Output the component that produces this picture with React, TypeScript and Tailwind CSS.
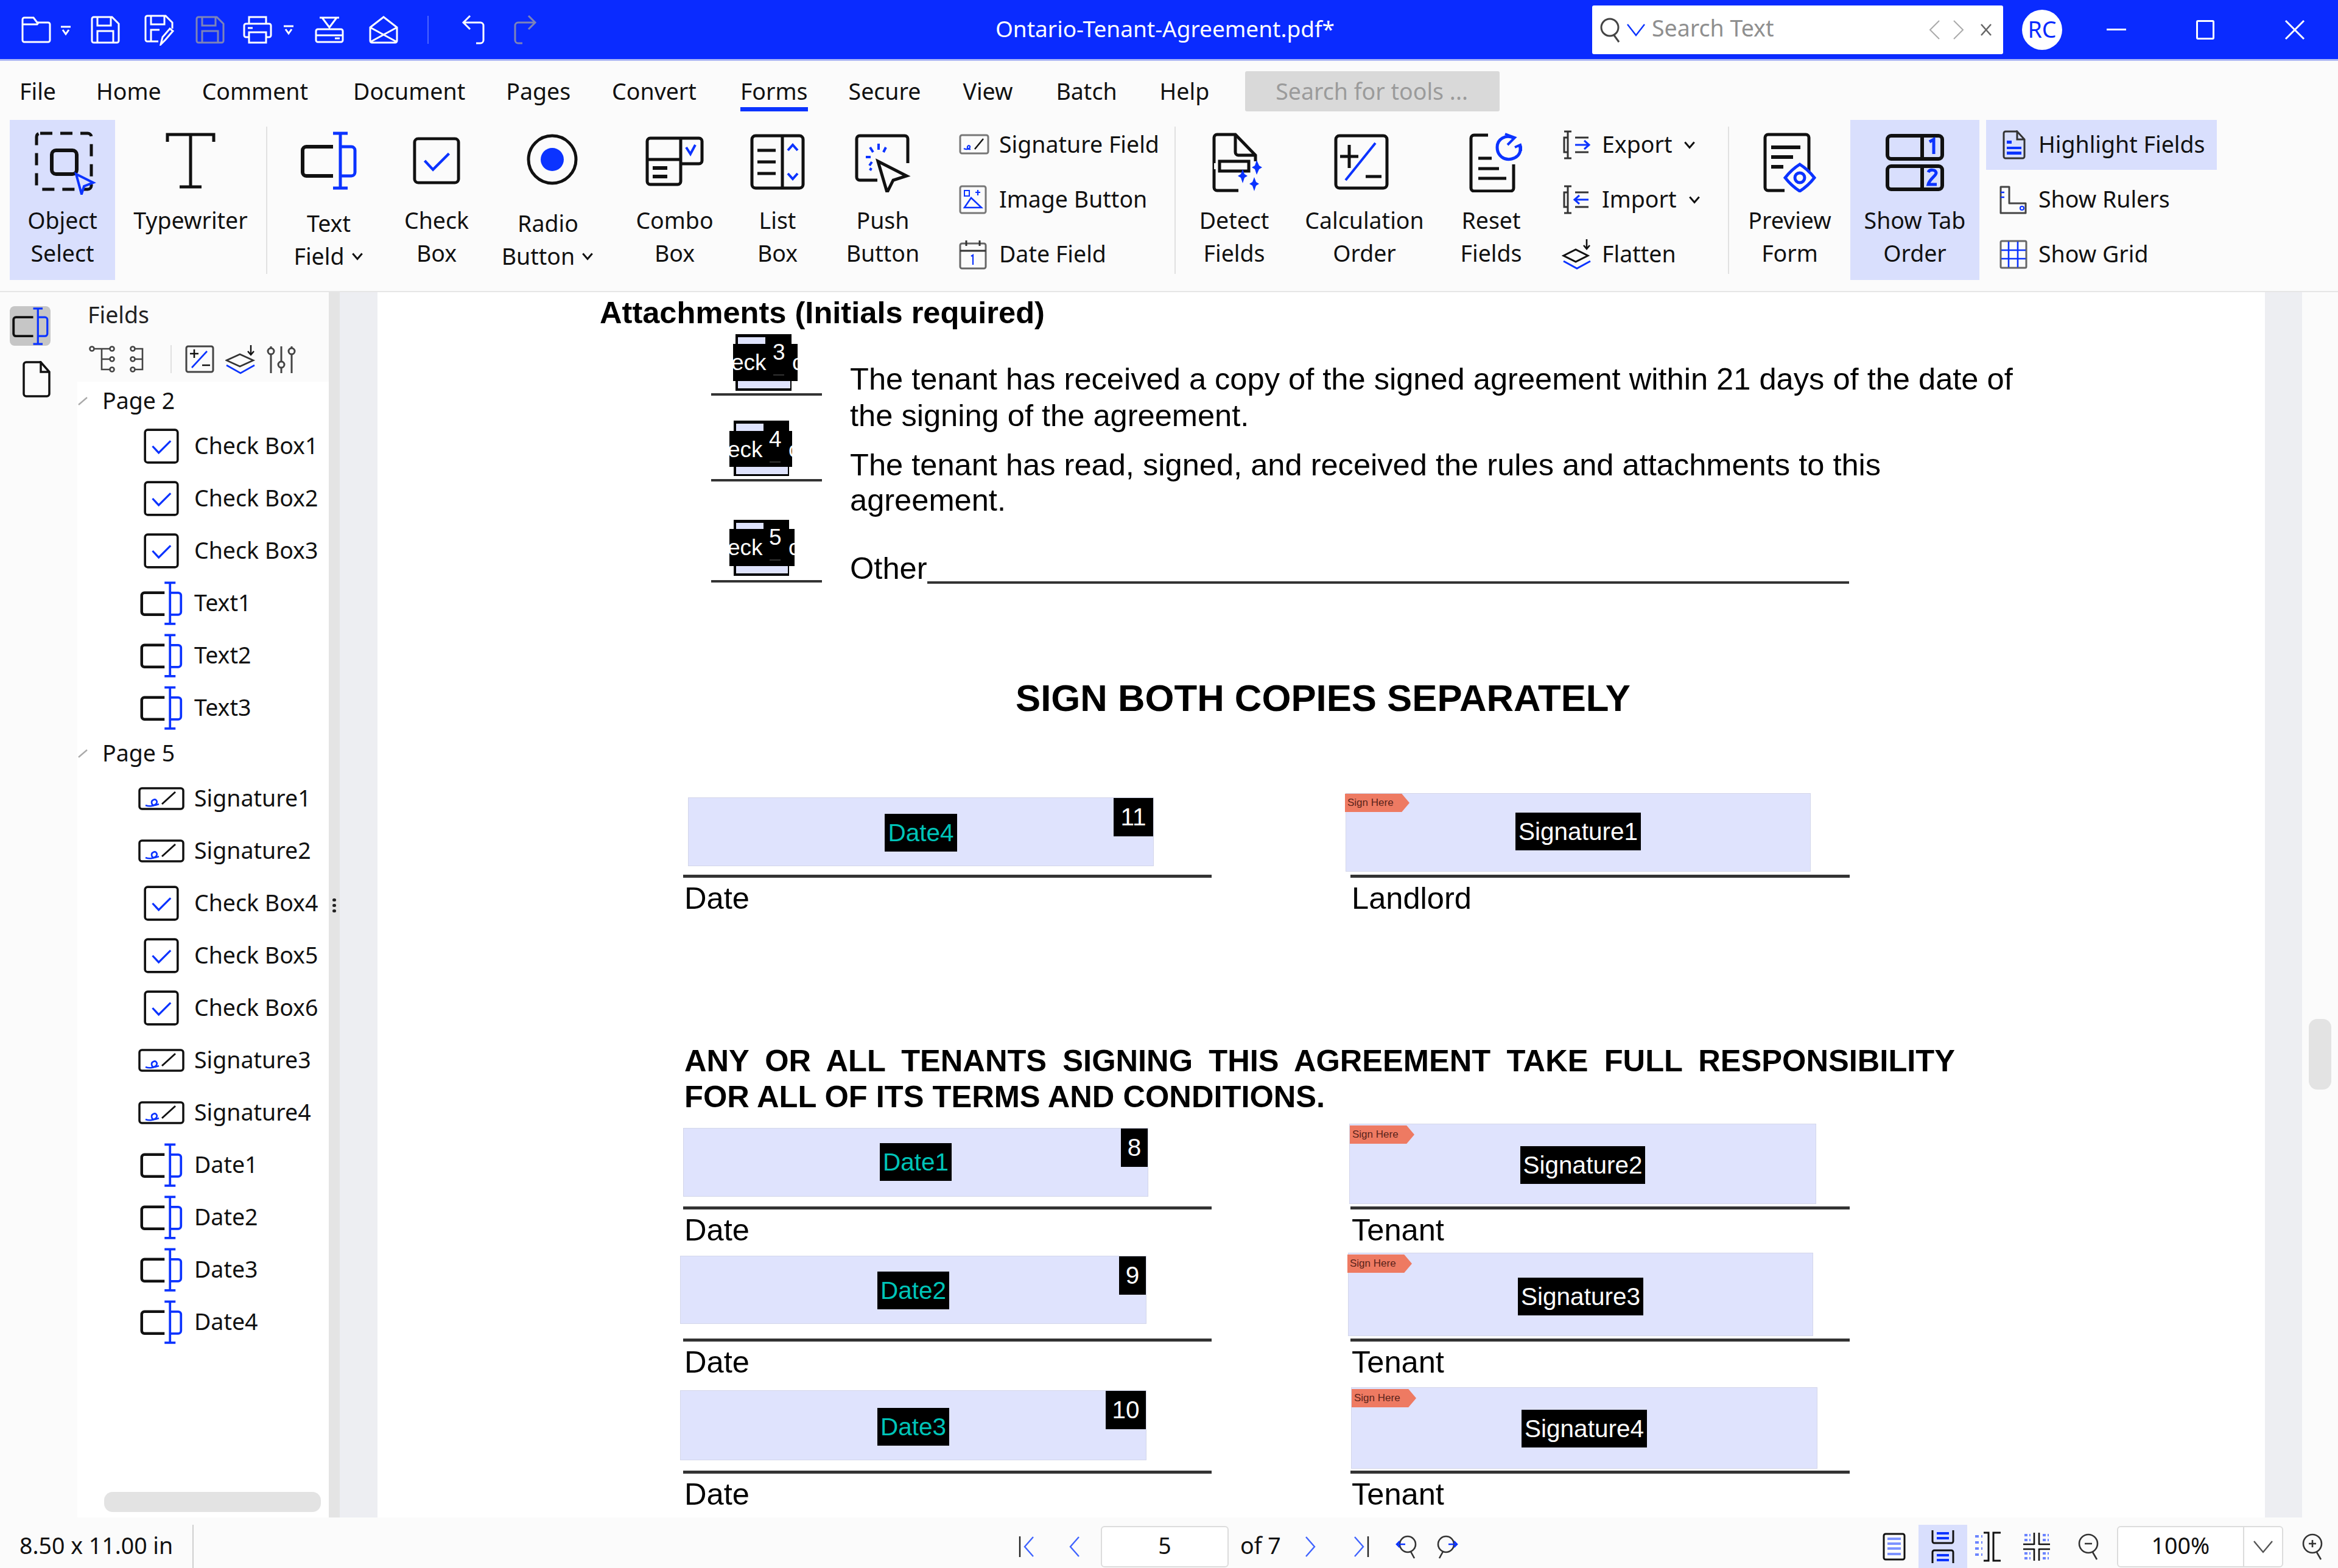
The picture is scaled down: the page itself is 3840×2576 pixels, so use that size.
import type { ReactNode } from "react";

const BLUE = "#0b33ff";

type IconProps = { className?: string };

const Chev = ({ className = "" }: IconProps) => (
  <svg className={className} viewBox="0 0 20 12" fill="none" stroke="#111" strokeWidth="2.8">
    <path d="M3 2l7 8 7-8" />
  </svg>
);

const TextFieldIcon = ({ className = "" }: IconProps) => (
  <svg className={className} viewBox="0 0 96 96" fill="none" strokeWidth="5">
    <path d="M55 25H11a6 6 0 0 0-6 6v36a6 6 0 0 0 6 6h44" stroke="#111" strokeWidth="6" />
    <path d="M55 3h24M67 3v90M55 93h24M67 25h18a6 6 0 0 1 6 6v36a6 6 0 0 1-6 6H67" stroke={BLUE} />
  </svg>
);

const CheckIcon = ({ className = "" }: IconProps) => (
  <svg className={className} viewBox="0 0 80 80" fill="none">
    <rect x="3" y="3" width="74" height="74" rx="6" stroke="#111" strokeWidth="5" />
    <path d="M20 40l14 15 27-27" stroke={BLUE} strokeWidth="4.5" />
  </svg>
);

const SigIcon = ({ className = "" }: IconProps) => (
  <svg className={className} viewBox="0 0 76 38" fill="none">
    <rect x="2" y="2" width="72" height="34" rx="4" stroke="#111" strokeWidth="3.5" />
    <path d="M12 30c5 2 13 2 17-2 4-4 0-9-4-7-5 2-3 9 1 9 3 0 5-1 8-2" stroke={BLUE} strokeWidth="2.6" />
    <path d="M39 28L61 8" stroke="#111" strokeWidth="3" />
  </svg>
);

const BigIcon = {
  Object: () => (
    <svg className="ml-[10px] h-[104px] w-[102px]" viewBox="0 0 102 104" fill="none">
      <rect x="3" y="3" width="90" height="92" rx="6" stroke="#111" strokeWidth="5" strokeDasharray="20 13" />
      <rect x="28" y="31" width="41" height="39" rx="7" stroke="#111" strokeWidth="6" />
      <path d="M68 70l28 14-15 6-4 13z" stroke={BLUE} strokeWidth="4" fill="#dbe0fd" />
    </svg>
  ),
  Typewriter: () => (
    <svg className="h-[96px] w-[82px]" viewBox="0 0 82 96" fill="none" stroke="#111" strokeWidth="5">
      <path d="M3 17V5h76v12M41 5v84M23 91h36" />
    </svg>
  ),
  Radio: () => (
    <svg className="ml-[14px] mt-[2px] h-[88px] w-[86px]" viewBox="0 0 86 88" fill="none">
      <circle cx="43" cy="44" r="39" stroke="#111" strokeWidth="5" />
      <circle cx="43" cy="44" r="19" fill={BLUE} />
    </svg>
  ),
  Combo: () => (
    <svg className="mt-[8px] h-[82px] w-[96px]" viewBox="0 0 96 82" fill="none" stroke="#111" strokeWidth="5">
      <path d="M3 8a5 5 0 0 1 5-5h80a5 5 0 0 1 5 5v32a5 5 0 0 1-5 5H58M58 3v42M3 8v66a5 5 0 0 0 5 5h45a5 5 0 0 0 5-5V38M3 38h55" />
      <path d="M12 52h24M12 66h24" strokeWidth="6" />
      <path d="M67 18l7 11 8-15" stroke={BLUE} strokeWidth="4" />
    </svg>
  ),
  List: () => (
    <svg className="mt-[4px] h-[92px] w-[90px]" viewBox="0 0 90 92" fill="none" stroke="#111" strokeWidth="5">
      <rect x="3" y="3" width="84" height="86" rx="6" />
      <path d="M53 3v86M12 27h30M12 46h30M12 65h30" />
      <path d="M62 27l8-9 8 9M62 65l8 9 8-9" stroke={BLUE} strokeWidth="4" />
    </svg>
  ),
  Push: () => (
    <svg className="mt-[4px] h-[96px] w-[94px]" viewBox="0 0 94 96" fill="none">
      <path d="M38 76H9a5 5 0 0 1-5-5V8a5 5 0 0 1 5-5h74a5 5 0 0 1 5 5v40" stroke="#111" strokeWidth="5" />
      <path d="M39 45l47 24-22 7-10 20z" stroke="#111" strokeWidth="5" fill="#fbfbfb" />
      <path d="M40 16v10M26 22l5 8M52 22l-4 8M19 38h8M25 52l4-6M26 60l2-4" stroke={BLUE} strokeWidth="4" />
    </svg>
  ),
  Detect: () => (
    <svg className="ml-[10px] mt-[2px] h-[98px] w-[84px]" viewBox="0 0 84 98" fill="none">
      <path d="M44 95H9a5 5 0 0 1-5-5V8a5 5 0 0 1 5-5h30l33 34v10" stroke="#111" strokeWidth="5" />
      <path d="M39 3v29a5 5 0 0 0 5 5h28M13 63h48V47H13v16z" stroke="#111" strokeWidth="5" />
      <rect x="4" y="50" width="6" height="10" fill="#fbfbfb" />
      <path d="M74 45l4 9 5 3-5 3-4 9-3-9-5-3 5-3zM51 60l3 8 5 3-5 3-3 9-3-9-5-3 5-3zM70 73l3 8 5 3-5 3-3 9-3-9-5-3 5-3z" fill={BLUE} />
    </svg>
  ),
  Calc: () => (
    <svg className="mr-[10px] mt-[4px] h-[92px] w-[90px]" viewBox="0 0 90 92" fill="none">
      <rect x="3" y="3" width="84" height="86" rx="6" stroke="#111" strokeWidth="5" />
      <path d="M25 18v38M10 37h30M52 70h26" stroke="#111" strokeWidth="5" />
      <path d="M68 15L19 76" stroke={BLUE} strokeWidth="4" />
    </svg>
  ),
  Reset: () => (
    <svg className="ml-[14px] mt-[2px] h-[98px] w-[88px]" viewBox="0 0 88 98" fill="none">
      <path d="M32 4H9a5 5 0 0 0-5 5v82a5 5 0 0 0 5 5h60a5 5 0 0 0 5-5V52" stroke="#111" strokeWidth="5" />
      <path d="M16 42h22M16 59h34M16 75h46" stroke="#111" strokeWidth="5" />
      <path d="M73 8c-12-5-26 2-26 16s12 22 24 19 16-12 13-22" stroke={BLUE} strokeWidth="5" />
      <path d="M60 2l16 6-12 12M76 24l9-4 3 10" stroke={BLUE} strokeWidth="4" />
    </svg>
  ),
  Preview: () => (
    <svg className="mt-[2px] h-[98px] w-[90px]" viewBox="0 0 90 98" fill="none">
      <path d="M36 95H9a5 5 0 0 1-5-5V8a5 5 0 0 1 5-5h62a5 5 0 0 1 5 5v57" stroke="#111" strokeWidth="5" />
      <path d="M14 24h48M14 40h36M14 56h20" stroke="#111" strokeWidth="6" />
      <path d="M61 52c8 5 17 13 24 22-7 9-16 17-24 22-8-5-17-13-24-22 7-9 16-17 24-22z" stroke={BLUE} strokeWidth="5" />
      <circle cx="61" cy="74" r="8" stroke={BLUE} strokeWidth="5" />
    </svg>
  ),
  TabOrder: () => (
    <svg className="mt-[4px] h-[94px] w-[96px]" viewBox="0 0 96 94" fill="none" stroke="#111" strokeWidth="6">
      <rect x="3" y="3" width="90" height="38" rx="6" />
      <rect x="3" y="53" width="90" height="38" rx="6" />
      <path d="M60 3v38M60 53v38" />
      <path d="M72 13l7-4v24" stroke={BLUE} strokeWidth="5" />
      <path d="M70 63c2-5 12-5 13 1 0 5-11 10-13 19h14" stroke={BLUE} strokeWidth="5" />
    </svg>
  ),
};

const SmallIcon = {
  Signature: () => (
    <svg className="h-[36px] w-[50px]" viewBox="0 0 50 36" fill="none">
      <rect x="2" y="2" width="46" height="30" rx="3" stroke="#777" strokeWidth="3" />
      <path d="M8 24c4 2 9 1 10-2 1-3-3-4-4-1s1 5 5 4" stroke={BLUE} strokeWidth="2.2" />
      <path d="M26 25l14-17" stroke="#111" strokeWidth="2.5" />
    </svg>
  ),
  Image: () => (
    <svg className="h-[48px] w-[46px]" viewBox="0 0 46 48" fill="none">
      <rect x="2" y="2" width="42" height="44" rx="3" stroke="#777" strokeWidth="3" />
      <path d="M9 37l11-16 17 16z" stroke={BLUE} strokeWidth="2.5" />
      <rect x="9" y="9" width="8" height="9" stroke={BLUE} strokeWidth="2" />
      <path d="M31 8v9M27 12h8" stroke={BLUE} strokeWidth="2.2" />
    </svg>
  ),
  Date: () => (
    <svg className="h-[50px] w-[46px]" viewBox="0 0 46 50" fill="none">
      <rect x="2" y="7" width="42" height="41" rx="3" stroke="#666" strokeWidth="3" />
      <path d="M2 19h42M12 2v9M34 2v9" stroke="#333" strokeWidth="3" />
      <path d="M20 28l3-2v16" stroke={BLUE} strokeWidth="2.2" />
    </svg>
  ),
  Export: () => (
    <svg className="h-[48px] w-[50px]" viewBox="0 0 50 48" fill="none">
      <path d="M4 2h12M10 2v44M4 46h12" stroke="#333" strokeWidth="3" />
      <path d="M10 12H4v24h6M22 12h22M22 36h22" stroke="#333" strokeWidth="3" />
      <path d="M22 24h22M37 17l8 7-8 7" stroke={BLUE} strokeWidth="3" />
    </svg>
  ),
  Import: () => (
    <svg className="h-[48px] w-[50px]" viewBox="0 0 50 48" fill="none">
      <path d="M4 2h12M10 2v44M4 46h12" stroke="#333" strokeWidth="3" />
      <path d="M10 12H4v24h6M22 12h22M22 36h22" stroke="#333" strokeWidth="3" />
      <path d="M22 24h22M29 17l-8 7 8 7" stroke={BLUE} strokeWidth="3" />
    </svg>
  ),
  Flatten: () => (
    <svg className="h-[50px] w-[50px]" viewBox="0 0 50 50" fill="none">
      <path d="M41 0v14M36 10l5 6 5-6" stroke="#111" strokeWidth="2.6" />
      <path d="M3 27l20-10 20 10-20 10z" stroke="#111" strokeWidth="3" />
      <path d="M3 36l22 12 22-12" stroke={BLUE} strokeWidth="3" />
    </svg>
  ),
  Highlight: () => (
    <svg className="h-[48px] w-[38px]" viewBox="0 0 38 48" fill="none">
      <path d="M24 2H5a3 3 0 0 0-3 3v38a3 3 0 0 0 3 3h28a3 3 0 0 0 3-3V15L24 2v13h12" stroke="#333" strokeWidth="3" />
      <path d="M7 17h8v5H7zM7 27h24v4H7zM7 35h24v5H7z" fill={BLUE} />
    </svg>
  ),
  Rulers: () => (
    <svg className="h-[48px] w-[46px]" viewBox="0 0 46 48" fill="none">
      <path d="M2 46V3h14v27h27v16z" stroke="#444" strokeWidth="3" strokeLinejoin="round" />
      <path d="M2 12h6M2 20h6" stroke={BLUE} strokeWidth="2.6" />
      <circle cx="37" cy="38" r="3" stroke={BLUE} strokeWidth="2.2" />
    </svg>
  ),
  Grid: () => (
    <svg className="h-[48px] w-[46px]" viewBox="0 0 46 48" fill="none">
      <rect x="2" y="2" width="42" height="44" rx="2" stroke="#666" strokeWidth="3" />
      <path d="M15 3v42M30 3v42M3 17h40M3 31h40" stroke={BLUE} strokeWidth="2.6" />
    </svg>
  ),
};

const LargeTool = ({ icon, lines, width, active, low }: { icon: ReactNode; lines: ReactNode[]; width: string; active?: boolean; low?: boolean }) => (
  <div className={`flex h-[263px] shrink-0 flex-col items-center ${width} ${active ? "bg-[#d9dffd]" : ""}`}>
    <div className="flex h-[126px] w-full items-start justify-center pt-[19px]">{icon}</div>
    <div className={`text-center leading-[54px] ${low ? "mt-[17px]" : "mt-[12px]"}`}>
      {lines.map((l, i) => (
        <div key={i} className="flex items-center justify-center gap-[10px] whitespace-nowrap">{l}</div>
      ))}
    </div>
  </div>
);

const SmallTool = ({ icon, label, chev, active, iconBox = "w-[66px]" }: { icon: ReactNode; label: string; chev?: boolean; active?: boolean; iconBox?: string }) => (
  <div className={`flex h-[82px] items-center whitespace-nowrap ${active ? "bg-[#d9dffd]" : ""}`}>
    <div className={`flex shrink-0 items-center justify-start ${iconBox}`}>{icon}</div>
    <span className="pb-[2px]">{label}</span>
    {chev && <Chev className="ml-[18px] h-[14px] w-[22px]" />}
  </div>
);

const Sep = () => <div className="mt-[11px] h-[242px] w-[2px] shrink-0 bg-[#e1e1e1]" />;

const TitleBar = () => (
  <div className="flex h-[97px] shrink-0 items-center bg-[#0a2bff] text-white">
    <svg className="ml-[34px] h-[46px] w-[88px]" viewBox="0 0 88 46" fill="none" stroke="#fff" strokeWidth="3">
      <path d="M3 40V6a3 3 0 0 1 3-3h15l6 8h18a3 3 0 0 1 3 3v26a3 3 0 0 1-3 3H6a3 3 0 0 1-3-3zM3 14h24l3-4" />
      <path d="M66 18h16M69 23l5 7 5-7" />
    </svg>
    <svg className="ml-[26px] h-[48px] w-[50px]" viewBox="0 0 50 48" fill="none" stroke="#fff" strokeWidth="3">
      <path d="M3 6a3 3 0 0 1 3-3h30l11 11v28a3 3 0 0 1-3 3H6a3 3 0 0 1-3-3zM12 3v14h22V3M12 45V26h26v19" />
    </svg>
    <svg className="ml-[38px] h-[52px] w-[50px]" viewBox="0 0 50 52" fill="none" stroke="#fff" strokeWidth="3">
      <path d="M24 45H6a3 3 0 0 1-3-3V6a3 3 0 0 1 3-3h30l11 11v10M12 3v14h22V3M12 45V26h14" />
      <path d="M28 50l3-12 12-14 5 4-12 14z" fill="#0a2bff" />
    </svg>
    <svg className="ml-[34px] h-[48px] w-[50px]" viewBox="0 0 50 48" fill="none" stroke="#7d84b8" strokeWidth="3">
      <path d="M3 6a3 3 0 0 1 3-3h30l11 11v28a3 3 0 0 1-3 3H6a3 3 0 0 1-3-3zM12 3v14h22V3M12 45V26h26v19" />
    </svg>
    <svg className="ml-[28px] h-[48px] w-[88px]" viewBox="0 0 88 48" fill="none" stroke="#fff" strokeWidth="3">
      <path d="M11 14V3h28v11M11 36H6a3 3 0 0 1-3-3V17a3 3 0 0 1 3-3h38a3 3 0 0 1 3 3v16a3 3 0 0 1-3 3h-5M11 28h28v17H11zM9 21h8" />
      <path d="M68 18h16M71 23l5 7 5-7" />
    </svg>
    <svg className="ml-[30px] h-[46px] w-[50px]" viewBox="0 0 50 46" fill="none" stroke="#fff" strokeWidth="3">
      <path d="M9 3h32M13 3l12 16 12-16M3 25a3 3 0 0 1 3-3h38a3 3 0 0 1 3 3v15a3 3 0 0 1-3 3H6a3 3 0 0 1-3-3zM3 32h44M34 37h8" />
    </svg>
    <svg className="ml-[39px] h-[48px] w-[50px]" viewBox="0 0 50 48" fill="none" stroke="#fff" strokeWidth="3">
      <path d="M3 20L25 3l22 17v22a3 3 0 0 1-3 3H6a3 3 0 0 1-3-3zM3 20l44 24M47 20L3 44" />
    </svg>
    <div className="ml-[47px] h-[46px] w-[2px] bg-[#4d66ff]" />
    <svg className="ml-[54px] h-[50px] w-[40px]" viewBox="0 0 40 50" fill="none" stroke="#fff" strokeWidth="3">
      <path d="M14 2L3 13l11 11M3 13h28a5 5 0 0 1 5 5v24a5 5 0 0 1-5 5h-7" />
    </svg>
    <svg className="ml-[44px] h-[50px] w-[40px]" viewBox="0 0 40 50" fill="none" stroke="#7d84b8" strokeWidth="3">
      <path d="M26 2l11 11-11 11M37 13H9a5 5 0 0 0-5 5v24a5 5 0 0 0 5 5h7" />
    </svg>
    <div className="ml-[750px] w-[563px] whitespace-nowrap pb-[4px] text-center text-[37px]">Ontario-Tenant-Agreement.pdf*</div>
    <div className="ml-[420px] flex h-[80px] w-[675px] shrink-0 items-center rounded-[3px] bg-white">
      <svg className="ml-[12px] h-[44px] w-[38px]" viewBox="0 0 38 44" fill="none" stroke="#444" strokeWidth="3">
        <circle cx="17" cy="18" r="14" />
        <path d="M24 31l8 11" />
      </svg>
      <svg className="ml-[6px] h-[22px] w-[32px]" viewBox="0 0 32 22" fill="none" stroke={BLUE} strokeWidth="2.4">
        <path d="M2 2l14 18L30 2" />
      </svg>
      <span className="ml-[10px] whitespace-nowrap pb-[4px] text-[#8f8f8f]">Search Text</span>
      <svg className="ml-auto h-[34px] w-[20px]" viewBox="0 0 20 34" fill="none" stroke="#aaa" strokeWidth="2">
        <path d="M18 2L3 17l15 15" />
      </svg>
      <svg className="ml-[20px] h-[34px] w-[20px]" viewBox="0 0 20 34" fill="none" stroke="#aaa" strokeWidth="2">
        <path d="M2 2l15 15L2 32" />
      </svg>
      <svg className="ml-[25px] mr-[18px] h-[22px] w-[20px]" viewBox="0 0 20 22" fill="none" stroke="#666" strokeWidth="2.6">
        <path d="M2 2l16 18M18 2L2 20" />
      </svg>
    </div>
    <div className="ml-[31px] flex h-[66px] w-[66px] shrink-0 items-center justify-center rounded-full bg-white text-[#0a2bff]">RC</div>
    <div className="ml-[73px] h-[3px] w-[32px] shrink-0 bg-white" />
    <div className="ml-[115px] h-[32px] w-[30px] shrink-0 rounded-[3px] border-[3px] border-white" />
    <svg className="ml-[115px] h-[34px] w-[34px] shrink-0" viewBox="0 0 34 34" fill="none" stroke="#fff" strokeWidth="3">
      <path d="M2 2l30 30M32 2L2 32" />
    </svg>
  </div>
);

const menu = [
  ["File", "ml-[32px]"],
  ["Home", "ml-[66px]"],
  ["Comment", "ml-[67px]"],
  ["Document", "ml-[74px]"],
  ["Pages", "ml-[67px]"],
  ["Convert", "ml-[68px]"],
  ["Forms", "ml-[72px]"],
  ["Secure", "ml-[67px]"],
  ["View", "ml-[69px]"],
  ["Batch", "ml-[71px]"],
  ["Help", "ml-[70px]"],
];

const MenuBar = () => (
  <div className="flex h-[97px] shrink-0 items-start bg-[#fbfbfb] pt-[17px]">
    {menu.map(([name, cls]) => (
      <div key={name} className={`flex h-[66px] flex-col justify-center border-b-[7px] whitespace-nowrap ${cls} ${name === "Forms" ? "border-[#0b33ff]" : "border-transparent"}`}>
        <span className="pt-[7px]">{name}</span>
      </div>
    ))}
    <div className="ml-[59px] flex h-[66px] w-[418px] items-center rounded-[3px] bg-[#d9d9d9] pl-[50px] text-[#9b9b9b]">Search for tools ...</div>
  </div>
);

const Ribbon = () => (
  <div className="flex h-[283px] shrink-0 border-b-[2px] border-[#e6e6e6] bg-[#fbfbfb] pl-[16px]">
    <LargeTool width="w-[173px]" active icon={<BigIcon.Object />} lines={["Object", "Select"]} />
    <LargeTool width="w-[248px]" icon={<BigIcon.Typewriter />} lines={["Typewriter"]} />
    <Sep />
    <LargeTool width="w-[202px]" low icon={<TextFieldIcon className="h-[96px] w-[96px]" />} lines={["Text", <>Field <Chev className="h-[14px] w-[22px]" /></>]} />
    <LargeTool width="w-[152px]" icon={<CheckIcon className="mt-[9px] h-[78px] w-[78px]" />} lines={["Check", "Box"]} />
    <LargeTool width="w-[214px]" low icon={<BigIcon.Radio />} lines={["Radio", <>Button <Chev className="h-[14px] w-[22px]" /></>]} />
    <LargeTool width="w-[202px]" icon={<BigIcon.Combo />} lines={["Combo", "Box"]} />
    <LargeTool width="w-[136px]" icon={<BigIcon.List />} lines={["List", "Box"]} />
    <LargeTool width="w-[210px]" icon={<BigIcon.Push />} lines={["Push", "Button"]} />
    <div className="flex w-[374px] shrink-0 flex-col gap-[8px] pl-[20px]">
      <SmallTool icon={<SmallIcon.Signature />} label="Signature Field" />
      <SmallTool icon={<SmallIcon.Image />} label="Image Button" />
      <SmallTool icon={<SmallIcon.Date />} label="Date Field" />
    </div>
    <Sep />
    <LargeTool width="w-[192px]" icon={<BigIcon.Detect />} lines={["Detect", "Fields"]} />
    <LargeTool width="w-[236px]" icon={<BigIcon.Calc />} lines={["Calculation", "Order"]} />
    <LargeTool width="w-[180px]" icon={<BigIcon.Reset />} lines={["Reset", "Fields"]} />
    <div className="flex w-[299px] shrink-0 flex-col gap-[8px] pl-[26px]">
      <SmallTool icon={<SmallIcon.Export />} label="Export" chev />
      <SmallTool icon={<SmallIcon.Import />} label="Import" chev />
      <SmallTool icon={<SmallIcon.Flatten />} label="Flatten" />
    </div>
    <Sep />
    <LargeTool width="w-[199px]" icon={<BigIcon.Preview />} lines={["Preview", "Form"]} />
    <LargeTool width="w-[212px]" active icon={<BigIcon.TabOrder />} lines={["Show Tab", "Order"]} />
    <div className="ml-[11px] flex w-[379px] shrink-0 flex-col gap-[8px]">
      <SmallTool active iconBox="w-[86px] pl-[27px]" icon={<SmallIcon.Highlight />} label="Highlight Fields" />
      <SmallTool iconBox="w-[86px] pl-[22px]" icon={<SmallIcon.Rulers />} label="Show Rulers" />
      <SmallTool iconBox="w-[86px] pl-[22px]" icon={<SmallIcon.Grid />} label="Show Grid" />
    </div>
  </div>
);

const treePage2 = [
  ["check", "Check Box1"],
  ["check", "Check Box2"],
  ["check", "Check Box3"],
  ["text", "Text1"],
  ["text", "Text2"],
  ["text", "Text3"],
];

const treePage5 = [
  ["sig", "Signature1"],
  ["sig", "Signature2"],
  ["check", "Check Box4"],
  ["check", "Check Box5"],
  ["check", "Check Box6"],
  ["sig", "Signature3"],
  ["sig", "Signature4"],
  ["text", "Date1"],
  ["text", "Date2"],
  ["text", "Date3"],
  ["text", "Date4"],
];

const TreeRow = ({ kind, label }: { kind: string; label: string }) => (
  <div className="flex h-[86px] items-center whitespace-nowrap pl-[85px]">
    <div className="flex w-[101px] shrink-0 justify-center pl-[3px]">
      {kind === "check" && <CheckIcon className="h-[58px] w-[58px]" />}
      {kind === "text" && <TextFieldIcon className="h-[72px] w-[72px]" />}
      {kind === "sig" && <SigIcon className="h-[38px] w-[76px]" />}
    </div>
    <span className="ml-[5px] pb-[1px]">{label}</span>
  </div>
);

const TreePage = ({ label }: { label: string }) => (
  <div className="flex h-[63px] items-center">
    <svg className="h-[14px] w-[16px]" viewBox="0 0 16 14" fill="none" stroke="#aaa" strokeWidth="2.4">
      <path d="M1 13L15 1" />
    </svg>
    <span className="ml-[24px]">{label}</span>
  </div>
);

const Sidebar = () => (
  <div className="flex w-[558px] shrink-0">
    <div className="flex w-[127px] shrink-0 flex-col items-start bg-[#fbfbfb] pl-[16px] pt-[23px]">
      <div className="flex h-[65px] w-[67px] items-center justify-center rounded-[8px] bg-[#c6c6c6]">
        <TextFieldIcon className="h-[62px] w-[62px]" />
      </div>
      <svg className="ml-[21px] mt-[25px] h-[60px] w-[46px]" viewBox="0 0 46 60" fill="none" stroke="#111" strokeWidth="3.5">
        <path d="M30 2H6a4 4 0 0 0-4 4v48a4 4 0 0 0 4 4h34a4 4 0 0 0 4-4V18L30 2v16h14" />
      </svg>
    </div>
    <div className="flex w-[413px] shrink-0 flex-col bg-[#fbfbfb]">
      <div className="flex h-[74px] items-center pl-[17px] text-[#222]">Fields</div>
      <div className="flex h-[73px] items-start pl-[19px] pt-[13px]">
        <svg className="h-[46px] w-[46px]" viewBox="0 0 46 46" fill="none" stroke="#444" strokeWidth="2.6">
          <circle cx="5" cy="6" r="3.5" /><circle cx="38" cy="6" r="3.5" /><circle cx="38" cy="23" r="3.5" /><circle cx="38" cy="40" r="3.5" />
          <path d="M9 6h25M21 6v34h13M21 23h13" />
        </svg>
        <svg className="ml-[19px] h-[46px] w-[28px]" viewBox="0 0 28 46" fill="none" stroke="#444" strokeWidth="2.6">
          <circle cx="7" cy="6" r="3.5" /><circle cx="7" cy="23" r="3.5" /><circle cx="7" cy="40" r="3.5" />
          <path d="M11 6h12v34H11M11 23h12" />
        </svg>
        <div className="ml-[41px] h-[46px] w-[2px] bg-[#e0e0e0]" />
        <svg className="ml-[22px] h-[46px] w-[48px]" viewBox="0 0 48 46" fill="none">
          <rect x="2" y="2" width="44" height="42" rx="3" stroke="#444" strokeWidth="3" />
          <path d="M8 14h14M15 7v14M28 33h13" stroke="#111" strokeWidth="2.6" />
          <path d="M36 10L11 37" stroke={BLUE} strokeWidth="2.6" />
        </svg>
        <svg className="ml-[18px] h-[48px] w-[50px]" viewBox="0 0 50 48" fill="none">
          <path d="M42 0v14M37 10l5 6 5-6" stroke="#111" strokeWidth="2.4" />
          <path d="M2 25l22-10 22 10-22 10z" stroke="#333" strokeWidth="2.6" />
          <path d="M2 33l23 13 23-13" stroke={BLUE} strokeWidth="2.6" />
        </svg>
        <svg className="ml-[18px] h-[46px] w-[48px]" viewBox="0 0 48 46" fill="none" stroke="#444" strokeWidth="3">
          <path d="M7 16v30M24 2v24M24 38v8M41 16v30M7 2v4M41 2v4" />
          <circle cx="7" cy="10" r="5" /><circle cx="24" cy="32" r="5" /><circle cx="41" cy="10" r="5" />
        </svg>
      </div>
      <div className="relative flex-1 bg-white pl-[1px]">
        <TreePage label="Page 2" />
        {treePage2.map(([k, l]) => <TreeRow key={l} kind={k} label={l} />)}
        <TreePage label="Page 5" />
        {treePage5.map(([k, l]) => <TreeRow key={l} kind={k} label={l} />)}
        <div className="absolute bottom-[9px] left-[44px] h-[33px] w-[356px] rounded-[14px] bg-[#e3e3e3]" />
      </div>
    </div>
    <div className="flex w-[18px] shrink-0 flex-col items-center justify-center gap-[4px] bg-[#e4e4e4] pt-[1px]">
      <i className="h-[5px] w-[6px] rounded-full bg-[#222]" />
      <i className="h-[5px] w-[6px] rounded-full bg-[#222]" />
      <i className="h-[5px] w-[6px] rounded-full bg-[#222]" />
    </div>
  </div>
);

const InitialField = ({ num, outer, main, top, bottom, region }: { num: string; outer: string; main: string; top: string; bottom: string; region: string }) => (
  <div className={`relative w-[182px] border-b-[4px] border-[#333] ${region}`}>
    <div className={`absolute bg-black ${outer}`}>
      <div className={`absolute bg-[#dfe3fd] ${top}`} />
      <div className={`absolute bg-[#dfe3fd] ${bottom}`} />
    </div>
    <div className={`absolute overflow-hidden bg-black text-[37px] leading-[37px] text-white ${main}`}>
      <span className="absolute -left-[3px] top-[12px]">eck</span>
      <span className="absolute left-[65px] -top-[5px]">{num}</span>
      <i className="absolute left-[66px] top-[50px] h-[2px] w-[18px] bg-[#333]" />
      <span className="absolute left-[97px] top-[12px]">c</span>
    </div>
  </div>
);

const Field = ({ label, box, teal, badge, badgeBox, tagBox }: { label: string; box: string; teal?: boolean; badge?: string; badgeBox?: string; tagBox?: string }) => (
  <div className={`relative flex shrink-0 items-start justify-center border border-[#d3d6ea] bg-[#dfe3fd] ${box}`}>
    <div className={`flex h-[62px] items-center bg-black px-[5px] text-[40.5px] ${teal ? "text-[#00c4b8]" : "text-white"}`}>{label}</div>
    {badge && <div className={`absolute top-0 flex h-[63px] items-center justify-center bg-black text-[40.5px] text-white ${badgeBox}`}>{badge}</div>}
    {tagBox && (
      <div className={`absolute flex h-[30px] w-[106px] items-center bg-[#ee7a62] pl-[4px] text-[17px] text-[#5a231a] [clip-path:polygon(0_0,88%_0,100%_50%,88%_100%,0_100%)] ${tagBox}`}>Sign Here</div>
    )}
  </div>
);

const Signer = ({ region, label, children }: { region: string; label: string; children: ReactNode }) => (
  <div className="flex flex-col">
    <div className={`flex items-start border-b-[5px] border-[#333] ${region}`}>{children}</div>
    <div className="flex h-[64px] items-center pl-[2px] pt-[4px] text-[50.6px]">{label}</div>
  </div>
);

const SignRow = ({ left, right }: { left: ReactNode; right: ReactNode }) => (
  <div className="flex pl-[502px]">
    <div className="w-[868px] shrink-0">{left}</div>
    <div className="ml-[228px] w-[820px] shrink-0">{right}</div>
  </div>
);

const Page = () => (
  <div className="flex min-w-0 flex-1 bg-[#edeef2]">
    <div className="w-[62px] shrink-0" />
    <div className="w-[3100px] shrink-0 overflow-hidden bg-white font-['Liberation_Sans',Arial,sans-serif] text-[50.6px] text-black">
      <div className="flex h-[68px] items-center pl-[365px] font-bold">Attachments (Initials required)</div>
      <div className="flex">
        <div className="ml-[548px] w-[182px] shrink-0 pt-[1px]">
          <InitialField num="3" region="h-[101px]" outer="left-[40px] top-0 h-[93px] w-[92px]" main="left-[36px] top-[16px] h-[61px] w-[106px]" top="left-[4px] top-[5px] h-[11px] w-[45px]" bottom="left-[4px] top-[77px] h-[12px] w-[86px]" />
          <InitialField num="4" region="mt-[41px] h-[100px]" outer="left-[37px] top-0 h-[91px] w-[91px]" main="left-[30px] top-[17px] h-[59px] w-[103px]" top="left-[4px] top-[5px] h-[12px] w-[45px]" bottom="left-[4px] top-[76px] h-[12px] w-[85px]" />
          <InitialField num="5" region="mt-[63px] h-[103px]" outer="left-[37px] top-0 h-[92px] w-[91px]" main="left-[30px] top-[15px] h-[61px] w-[107px]" top="left-[4px] top-[5px] h-[11px] w-[45px]" bottom="left-[4px] top-[76px] h-[12px] w-[85px]" />
        </div>
        <div className="ml-[46px] flex-1 pt-[45px]">
          <p className="w-[1950px] leading-[60px]">The tenant has received a copy of the signed agreement within 21 days of the date of the signing of the agreement.</p>
          <p className="mt-[22px] w-[1800px] leading-[58px]">The tenant has read, signed, and received the rules and attachments to this agreement.</p>
          <div className="mt-[53px] flex h-[60px] items-start leading-[60px]">
            <span>Other</span>
            <div className="mt-[51px] h-[4px] w-[1514px] bg-[#333]" />
          </div>
        </div>
      </div>
      <div className="mt-[143px] flex h-[80px] items-center pl-[1048px] text-[61.7px] font-bold">SIGN BOTH COPIES SEPARATELY</div>
      <div className="mt-[118px]">
        <SignRow
          left={<Signer region="h-[137px]" label="Date"><Field label="Date4" teal box="ml-[8px] mt-[5px] h-[113px] w-[765px] pt-[26px]" badge="11" badgeBox="right-0 w-[65px]" /></Signer>}
          right={<Signer region="h-[137px]" label="Landlord"><Field label="Signature1" box="-ml-[8px] -mt-[2px] h-[129px] w-[764px] pt-[31px]" tagBox="-left-[2px] top-0" /></Signer>}
        />
      </div>
      <div className="ml-[504px] mt-[207px] w-[2087px] font-bold leading-[59px]">
        <div className="whitespace-nowrap [text-align-last:justify]">ANY OR ALL TENANTS SIGNING THIS AGREEMENT TAKE FULL RESPONSIBILITY</div>
        <div>FOR ALL OF ITS TERMS AND CONDITIONS.</div>
      </div>
      <div className="mt-[10px]">
        <SignRow
          left={<Signer region="h-[146px]" label="Date"><Field label="Date1" teal box="mt-[12px] h-[113px] w-[764px] pt-[24px]" badge="8" badgeBox="right-0 w-[44px]" /></Signer>}
          right={<Signer region="h-[146px]" label="Tenant"><Field label="Signature2" box="-ml-[2px] mt-[5px] h-[132px] w-[767px] pt-[36px]" tagBox="left-0 top-[2px]" /></Signer>}
        />
        <SignRow
          left={<Signer region="h-[153px]" label="Date"><Field label="Date2" teal box="-ml-[5px] mt-[12px] h-[112px] w-[766px] pt-[25px]" badge="9" badgeBox="right-0 w-[44px]" /></Signer>}
          right={<Signer region="h-[153px]" label="Tenant"><Field label="Signature3" box="-ml-[4px] mt-[7px] h-[137px] w-[764px] pt-[40px]" tagBox="-left-[2px] top-[2px]" /></Signer>}
        />
        <SignRow
          left={<Signer region="h-[153px]" label="Date"><Field label="Date3" teal box="-ml-[5px] mt-[16px] h-[115px] w-[766px] pt-[28px]" badge="10" badgeBox="right-0 w-[66px]" /></Signer>}
          right={<Signer region="h-[153px]" label="Tenant"><Field label="Signature4" box="ml-[1px] mt-[11px] h-[134px] w-[766px] pt-[36px]" tagBox="left-0 top-[2px]" /></Signer>}
        />
      </div>
    </div>
    <div className="w-[61px] shrink-0" />
    <div className="flex w-[59px] shrink-0 justify-center bg-[#fbfbfb] pt-[1194px]">
      <div className="h-[116px] w-[37px] rounded-[14px] bg-[#e3e3e3]" />
    </div>
  </div>
);

const NavChev = ({ dir, bar, className = "" }: { dir: "l" | "r"; bar?: boolean; className?: string }) => (
  <svg className={`h-[36px] w-[30px] ${className}`} viewBox="0 0 30 36" fill="none" stroke="#3f63ff" strokeWidth="2.4">
    <path d={dir === "l" ? "M26 2L12 18l14 16" : "M4 2l14 16L4 34"} />
    {bar && <path d={dir === "l" ? "M4 1v34" : "M26 1v34"} stroke="#222" />}
  </svg>
);

const StatusBar = () => (
  <div className="flex h-[83px] shrink-0 items-center bg-[#fbfbfb] pt-[12px] text-[#111]">
    <span className="ml-[32px] w-[284px] whitespace-nowrap pb-[3px]">8.50 x 11.00 in</span>
    <div className="h-[71px] w-[2px] self-end bg-[#cfcfcf]" />
    <NavChev dir="l" bar className="ml-[1353px]" />
    <NavChev dir="l" className="ml-[45px]" />
    <div className="ml-[32px] flex h-[68px] w-[210px] items-center justify-center rounded-[6px] border-[2px] border-[#dcdcdc] bg-white pb-[3px]">5</div>
    <span className="ml-[19px] whitespace-nowrap pb-[3px]">of 7</span>
    <NavChev dir="r" className="ml-[37px]" />
    <NavChev dir="r" bar className="ml-[50px]" />
    <svg className="ml-[41px] h-[42px] w-[38px]" viewBox="0 0 38 42" fill="none" stroke="#333" strokeWidth="2.6">
      <circle cx="20" cy="17" r="13" /><path d="M25 29l6 11" />
      <path d="M2 17h14M7 12l-5 5 5 5" stroke={BLUE} />
    </svg>
    <svg className="ml-[27px] h-[42px] w-[38px]" viewBox="0 0 38 42" fill="none" stroke="#333" strokeWidth="2.6">
      <circle cx="18" cy="17" r="13" /><path d="M13 29L7 40" />
      <path d="M22 17h14M31 12l5 5-5 5" stroke={BLUE} />
    </svg>
    <svg className="ml-[697px] h-[46px] w-[40px]" viewBox="0 0 40 46" fill="none">
      <rect x="2" y="2" width="34" height="42" rx="3" stroke="#111" strokeWidth="3" />
      <path d="M8 10h22M8 18h22M8 26h22M8 35h22" stroke="#7d93ff" strokeWidth="4" />
    </svg>
    <div className="ml-[19px] flex h-[71px] w-[80px] items-center justify-center self-end bg-[#d9dffd]">
      <svg className="h-[56px] w-[40px]" viewBox="0 0 40 56" fill="none">
        <path d="M3 1v18a3 3 0 0 0 3 3h28a3 3 0 0 0 3-3V1M3 55V37a3 3 0 0 1 3-3h28a3 3 0 0 1 3 3v18" stroke="#111" strokeWidth="3" />
        <path d="M10 6h20M10 14h20M10 42h20M10 50h20" stroke={BLUE} strokeWidth="4" />
      </svg>
    </div>
    <svg className="ml-[13px] h-[50px] w-[44px]" viewBox="0 0 44 50" fill="none">
      <path d="M14 2h8v46h-8M42 2h-12v46h12" stroke="#111" strokeWidth="3" />
      <path d="M0 8h12M0 18h12M0 28h12M0 38h12" stroke="#6b84ff" strokeWidth="4" strokeDasharray="6 4" />
    </svg>
    <svg className="ml-[35px] h-[50px] w-[44px]" viewBox="0 0 44 50" fill="none">
      <path d="M18 22V2M26 22V2M18 48V28M26 48V28M0 21h18M26 21h18M0 29h18M26 29h18" stroke="#111" strokeWidth="2.6" />
      <path d="M2 6h10M32 6h10M2 14h10M32 14h10M2 36h10M32 36h10M2 44h10M32 44h10" stroke="#6b84ff" strokeWidth="4" strokeDasharray="5 3" />
    </svg>
    <svg className="ml-[45px] h-[46px] w-[38px]" viewBox="0 0 38 46" fill="none" stroke="#333" strokeWidth="2.6">
      <circle cx="18" cy="18" r="15" /><path d="M25 32l7 12M12 18h12" />
    </svg>
    <div className="ml-[27px] flex h-[68px] w-[273px] items-center rounded-[6px] border-[2px] border-[#dcdcdc] bg-white">
      <span className="w-[205px] pb-[3px] text-center">100%</span>
      <div className="flex h-full flex-1 items-center justify-center border-l-[2px] border-[#dcdcdc]">
        <svg className="h-[22px] w-[34px]" viewBox="0 0 34 22" fill="none" stroke="#555" strokeWidth="2.4"><path d="M2 2l15 18L32 2" /></svg>
      </div>
    </div>
    <svg className="ml-[30px] h-[46px] w-[40px]" viewBox="0 0 40 46" fill="none" stroke="#333" strokeWidth="2.6">
      <circle cx="18" cy="18" r="15" /><path d="M25 32l7 12M12 18h12" />
      <path d="M18 12v12" />
    </svg>
  </div>
);

export default function App() {
  return (
    <div className="flex h-[2576px] w-[3840px] flex-col overflow-hidden bg-[#fbfbfb] font-['Noto_Sans',sans-serif] text-[37.5px] text-[#111]">
      <TitleBar />
      <div className="h-[3px] shrink-0 bg-[#aeb8f4]" />
      <MenuBar />
      <Ribbon />
      <div className="flex min-h-0 flex-1">
        <Sidebar />
        <Page />
      </div>
      <StatusBar />
    </div>
  );
}
